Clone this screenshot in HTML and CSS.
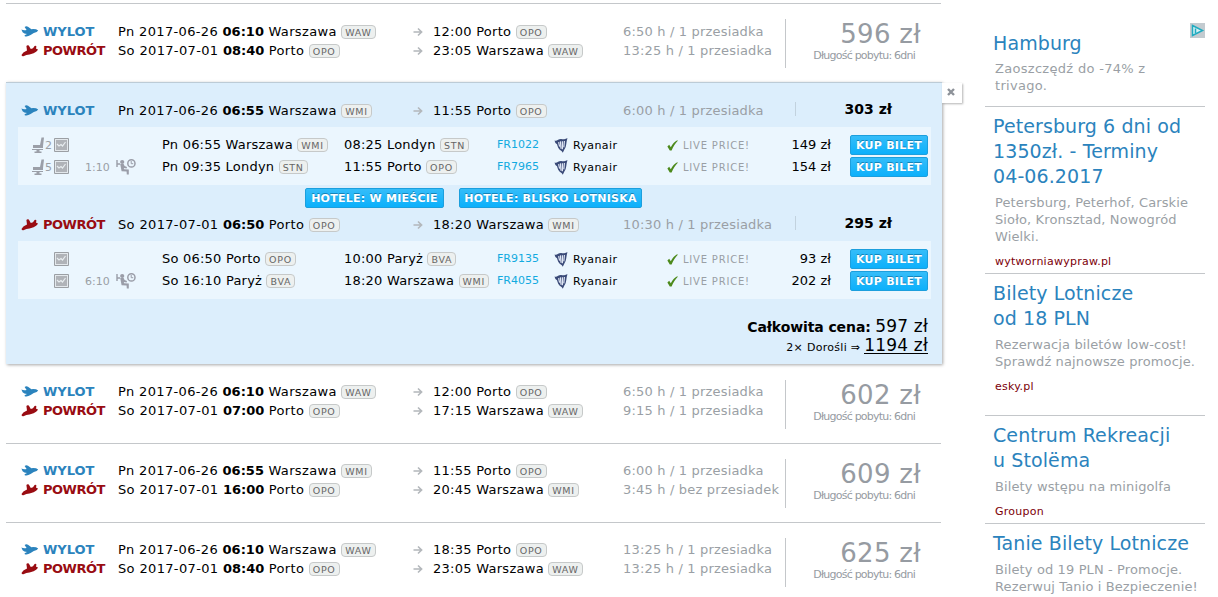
FILE: index.html
```
<!DOCTYPE html>
<html lang="pl">
<head>
  <meta charset="UTF-8">
  <title>Loty Warszawa - Porto</title>
  <link rel="stylesheet" href="styles.css">
</head>
<body>
  <svg class="sprite" width="0" height="0">
    <symbol id="plane-out" viewBox="0 0 18 13">
      <path d="M0.4 4.6 Q2.6 5.6 5.6 5 L3.6 2 Q5.4 0.8 7 1.8 L10.4 4.2 Q15 3.8 17.2 5.4 Q16.4 7.2 12.8 8 L9.6 10 Q6.4 12 3.8 11.2 L3.6 10.2 L6 9 Q3 9 1.6 7.2 Z"/>
    </symbol>
    <symbol id="plane-back" viewBox="0 0 18 13">
      <path d="M0.5 11 L2.4 8.4 L6 6.6 L5.4 2 Q6.4 0.6 7.8 1.6 L9.8 5 L12 4.2 L13.6 2 Q15 1.2 15.4 2.4 L15 4.8 Q17 4.8 16.8 6 Q15.6 8 12.6 9.2 L8.5 10.4 Q5 10.8 3 12 Q1 12.8 0.5 11 Z"/>
    </symbol>
    <symbol id="arrow" viewBox="0 0 10 10">
      <path d="M0.5 5 H8 M5 1.5 L8.6 5 L5 8.5" fill="none" stroke="currentColor" stroke-width="1.6"/>
    </symbol>
    <symbol id="seat" viewBox="0 0 13 16">
      <path d="M9.5 0.5 L12 0.5 L11 9 L11 11 L1 11 L1 8 L8 8 Z M0 12 H11 V13 H7.5 V14.5 H9.5 V16 H2.5 V14.5 H4.5 V13 H0 Z"/>
    </symbol>
    <symbol id="chart" viewBox="0 0 15 14">
      <path d="M0.5 0.5 H14.5 V13.5 H0.5 Z" fill="#e3e8ec" stroke="#9b9fa4"/>
      <path d="M2 2 H13 V12 H2 Z" fill="#b0b3b8"/>
      <path d="M3 6 L5 8 L7 6.5 L8.5 8 L11.5 4" fill="none" stroke="#e8edf0" stroke-width="1.2"/>
    </symbol>
    <symbol id="wait" viewBox="0 0 20 16">
      <path d="M1 1 V8 M1.5 5 H4" fill="none" stroke="currentColor" stroke-width="1.4"/>
      <circle cx="6.2" cy="3" r="2.1"/>
      <path d="M4.2 5 L7.6 5 L8.6 7 L11 8 L10.6 9.4 L7.8 9 L8.2 10.2 L12.8 10.4 L12.8 15.6 L10.8 15.6 L10.6 12.4 L5.6 12.2 Z"/>
      <circle cx="15.4" cy="4.4" r="3.6" fill="none" stroke="currentColor" stroke-width="1.5"/>
      <path d="M15.2 2 V4.7 H17.2" fill="none" stroke="currentColor"/>
    </symbol>
    <symbol id="harp" viewBox="0 0 14 15">
      <path d="M0.5 2.4 C3 3.8 4.5 0.4 8 1.2 C10 1.6 11.5 0.6 13.5 0.2 C12 4 12.8 8 10.6 11 L8.8 14.8 L7.8 13.2 C4.5 11.6 3.6 8.5 3 6.2 L1.4 5 Z" fill="#3a4a78"/>
      <path d="M4.6 4.2 L5.6 8.6 M6.4 3.4 L7 10.8 M8.4 3.2 L8.4 11.2 M10.4 3 L9.8 9.4" stroke="#dfe6f4" stroke-width="1.2"/>
    </symbol>
    <symbol id="check" viewBox="0 0 11 11">
      <path d="M0.4 6.4 L2.2 4.8 L3.8 7.2 C5.4 4 7.6 1.6 10.2 0.2 L10.8 0.8 C8.4 3.4 6.4 6.6 4.6 10.4 L2.8 10.6 Z"/>
    </symbol>
  </svg>

  <div class="page">
    <main class="results">
      <div class="offer">
        <div class="legs">
          <div class="leg"><svg class="plane out"><use href="#plane-out"/></svg><b class="dir out">WYLOT</b><span class="from">Pn 2017-06-26 <b>06:10</b> Warszawa <i>WAW</i></span><svg class="arrow"><use href="#arrow"/></svg><span class="to">12:00 Porto <i>OPO</i></span><span class="time">6:50 h / 1 przesiadka</span></div>
          <div class="leg"><svg class="plane back"><use href="#plane-back"/></svg><b class="dir back">POWRÓT</b><span class="from">So 2017-07-01 <b>08:40</b> Porto <i>OPO</i></span><svg class="arrow"><use href="#arrow"/></svg><span class="to">23:05 Warszawa <i>WAW</i></span><span class="time">13:25 h / 1 przesiadka</span></div>
        </div>
        <div class="price"><span class="amount">596 zł</span><span class="stay">Długość pobytu: 6dni</span></div>
      </div>

      <div class="offer-open">
        <div class="close"><svg width="8" height="8" viewBox="0 0 8 8"><path d="M1 1 L7 7 M7 1 L1 7" stroke="#8d9299" stroke-width="2.4"/></svg></div>
        <div class="leg"><svg class="plane out"><use href="#plane-out"/></svg><b class="dir out">WYLOT</b><span class="from">Pn 2017-06-26 <b>06:55</b> Warszawa <i>WMI</i></span><svg class="arrow"><use href="#arrow"/></svg><span class="to">11:55 Porto <i>OPO</i></span><span class="time">6:00 h / 1 przesiadka</span><b class="leg-price">303 zł</b></div>
        <div class="flights">
          <div class="flight"><span class="seats"><svg class="seat"><use href="#seat"/></svg>2</span><svg class="chart"><use href="#chart"/></svg><span class="wait"></span><span class="dep">Pn 06:55 Warszawa <i>WMI</i></span><span class="arr">08:25 Londyn <i>STN</i></span><a class="number">FR1022</a><svg class="harp"><use href="#harp"/></svg><span class="carrier">Ryanair</span><svg class="check"><use href="#check"/></svg><span class="live">LIVE PRICE!</span><span class="fare">149 zł</span><a class="btn buy">KUP BILET</a></div>
          <div class="flight"><span class="seats"><svg class="seat"><use href="#seat"/></svg>5</span><svg class="chart"><use href="#chart"/></svg><span class="wait">1:10<svg class="wait-icon"><use href="#wait"/></svg></span><span class="dep">Pn 09:35 Londyn <i>STN</i></span><span class="arr">11:55 Porto <i>OPO</i></span><a class="number">FR7965</a><svg class="harp"><use href="#harp"/></svg><span class="carrier">Ryanair</span><svg class="check"><use href="#check"/></svg><span class="live">LIVE PRICE!</span><span class="fare">154 zł</span><a class="btn buy">KUP BILET</a></div>
        </div>
        <div class="hotels"><a class="btn city">HOTELE: W MIEŚCIE</a><a class="btn airport">HOTELE: BLISKO LOTNISKA</a></div>
        <div class="leg"><svg class="plane back"><use href="#plane-back"/></svg><b class="dir back">POWRÓT</b><span class="from">So 2017-07-01 <b>06:50</b> Porto <i>OPO</i></span><svg class="arrow"><use href="#arrow"/></svg><span class="to">18:20 Warszawa <i>WMI</i></span><span class="time">10:30 h / 1 przesiadka</span><b class="leg-price">295 zł</b></div>
        <div class="flights">
          <div class="flight"><span class="seats"></span><svg class="chart"><use href="#chart"/></svg><span class="wait"></span><span class="dep">So 06:50 Porto <i>OPO</i></span><span class="arr">10:00 Paryż <i>BVA</i></span><a class="number">FR9135</a><svg class="harp"><use href="#harp"/></svg><span class="carrier">Ryanair</span><svg class="check"><use href="#check"/></svg><span class="live">LIVE PRICE!</span><span class="fare">93 zł</span><a class="btn buy">KUP BILET</a></div>
          <div class="flight"><span class="seats"></span><svg class="chart"><use href="#chart"/></svg><span class="wait">6:10<svg class="wait-icon"><use href="#wait"/></svg></span><span class="dep">So 16:10 Paryż <i>BVA</i></span><span class="arr">18:20 Warszawa <i>WMI</i></span><a class="number">FR4055</a><svg class="harp"><use href="#harp"/></svg><span class="carrier">Ryanair</span><svg class="check"><use href="#check"/></svg><span class="live">LIVE PRICE!</span><span class="fare">202 zł</span><a class="btn buy">KUP BILET</a></div>
        </div>
        <div class="total"><b>Całkowita cena:</b> <span class="sum">597 zł</span></div>
        <div class="total people">2× Dorośli ⇒ <span class="sum all">1194 zł</span></div>
      </div>

      <div class="offer first">
        <div class="legs">
          <div class="leg"><svg class="plane out"><use href="#plane-out"/></svg><b class="dir out">WYLOT</b><span class="from">Pn 2017-06-26 <b>06:10</b> Warszawa <i>WAW</i></span><svg class="arrow"><use href="#arrow"/></svg><span class="to">12:00 Porto <i>OPO</i></span><span class="time">6:50 h / 1 przesiadka</span></div>
          <div class="leg"><svg class="plane back"><use href="#plane-back"/></svg><b class="dir back">POWRÓT</b><span class="from">So 2017-07-01 <b>07:00</b> Porto <i>OPO</i></span><svg class="arrow"><use href="#arrow"/></svg><span class="to">17:15 Warszawa <i>WAW</i></span><span class="time">9:15 h / 1 przesiadka</span></div>
        </div>
        <div class="price"><span class="amount">602 zł</span><span class="stay">Długość pobytu: 6dni</span></div>
      </div>

      <div class="offer">
        <div class="legs">
          <div class="leg"><svg class="plane out"><use href="#plane-out"/></svg><b class="dir out">WYLOT</b><span class="from">Pn 2017-06-26 <b>06:55</b> Warszawa <i>WMI</i></span><svg class="arrow"><use href="#arrow"/></svg><span class="to">11:55 Porto <i>OPO</i></span><span class="time">6:00 h / 1 przesiadka</span></div>
          <div class="leg"><svg class="plane back"><use href="#plane-back"/></svg><b class="dir back">POWRÓT</b><span class="from">So 2017-07-01 <b>16:00</b> Porto <i>OPO</i></span><svg class="arrow"><use href="#arrow"/></svg><span class="to">20:45 Warszawa <i>WMI</i></span><span class="time">3:45 h / bez przesiadek</span></div>
        </div>
        <div class="price"><span class="amount">609 zł</span><span class="stay">Długość pobytu: 6dni</span></div>
      </div>

      <div class="offer">
        <div class="legs">
          <div class="leg"><svg class="plane out"><use href="#plane-out"/></svg><b class="dir out">WYLOT</b><span class="from">Pn 2017-06-26 <b>06:10</b> Warszawa <i>WAW</i></span><svg class="arrow"><use href="#arrow"/></svg><span class="to">18:35 Porto <i>OPO</i></span><span class="time">13:25 h / 1 przesiadka</span></div>
          <div class="leg"><svg class="plane back"><use href="#plane-back"/></svg><b class="dir back">POWRÓT</b><span class="from">So 2017-07-01 <b>08:40</b> Porto <i>OPO</i></span><svg class="arrow"><use href="#arrow"/></svg><span class="to">23:05 Warszawa <i>WAW</i></span><span class="time">13:25 h / 1 przesiadka</span></div>
        </div>
        <div class="price"><span class="amount">625 zł</span><span class="stay">Długość pobytu: 6dni</span></div>
      </div>
    </main>

    <aside class="ads">
      <svg class="adchoices" width="15" height="15" viewBox="0 0 15 15"><path d="M0 0 H15 V15 H0 Z" fill="#c3cbd0"/><path d="M2.5 2.5 L12.5 7.5 L2.5 12.5 Z" fill="#d5f1f5" stroke="#1fabc0" stroke-width="1.5"/><path d="M5.5 5.5 V10" stroke="#1fabc0" stroke-width="1.5"/></svg>
      <div class="ad hamburg">
        <h3>Hamburg</h3>
        <p>Zaoszczędź do -74% z<br>trivago.</p>
      </div>
      <div class="ad petersburg">
        <h3>Petersburg 6 dni od<br>1350zł. - Terminy<br>04-06.2017</h3>
        <p>Petersburg, Peterhof, Carskie<br>Sioło, Kronsztad, Nowogród<br>Wielki.</p>
        <a>wytworniawypraw.pl</a>
      </div>
      <div class="ad esky">
        <h3>Bilety Lotnicze<br>od 18 PLN</h3>
        <p>Rezerwacja biletów low-cost!<br>Sprawdź najnowsze promocje.</p>
        <a>esky.pl</a>
      </div>
      <div class="ad groupon">
        <h3>Centrum Rekreacji<br>u Stolëma</h3>
        <p>Bilety wstępu na minigolfa</p>
        <a>Groupon</a>
      </div>
      <div class="ad">
        <h3>Tanie Bilety Lotnicze</h3>
        <p>Bilety od 19 PLN - Promocje.<br>Rezerwuj Tanio i Bezpieczenie!</p>
      </div>
    </aside>
  </div>
</body>
</html>
```
FILE: styles.css
```
* {
  box-sizing: border-box;
}

body {
  margin: 0;
  height: 597px;
  overflow: hidden;
  background-color: #fff;
  color: #000;
  font-family: Verdana, "DejaVu Sans", sans-serif;
  font-size: 13px;
}

.sprite {
  display: block;
}

.page {
  display: flex;
  height: 597px;
  overflow: hidden;
}

.results {
  width: 936px;
  margin: 3px 43px 0 6px;
  flex: none;
}

/* single offer */
.offer {
  display: flex;
  width: 935px;
  height: 79px;
  border-top: 1px solid #c4c7ca;
}

.offer.first {
  border-top-color: transparent;
}

.legs {
  width: 779px;
  padding-top: 18px;
}

.offer-open ~ .offer .legs {
  padding-top: 17px;
}

.leg {
  display: flex;
  align-items: center;
  height: 19px;
  padding-left: 15px;
  white-space: nowrap;
}

.leg > * {
  flex: none;
}

.plane {
  width: 18px;
  height: 13px;
  margin-right: 4px;
}

.plane.out {
  fill: #2b83bd;
}

.plane.back {
  fill: #990c12;
}

.dir {
  width: 75px;
}

.dir.out {
  color: #2b83bd;
}

.dir.back {
  color: #990c12;
  letter-spacing: -0.5px;
}

.from {
  width: 295px;
  letter-spacing: 0.35px;
}

.from b {
  letter-spacing: 0;
}

.to {
  width: 190px;
  letter-spacing: 0.27px;
}

.arrow {
  width: 10px;
  height: 10px;
  margin-right: 10px;
  color: #b3b7bb;
}

.time {
  width: 172px;
  color: #9a9fa5;
  letter-spacing: 0.18px;
}

/* airport code */
i {
  display: inline-block;
  height: 14px;
  padding: 0 3px;
  border: 1px solid #c6c9c9;
  border-radius: 4px;
  background-color: #edf0ef;
  color: #666;
  font-size: 9.5px;
  font-style: normal;
  line-height: 13px;
  letter-spacing: 0.7px;
}

.price {
  display: flex;
  flex-direction: column;
  width: 136px;
  height: 49px;
  margin-top: 15px;
  border-left: 1px solid #c4c7ca;
  color: #969ba2;
  text-align: right;
  white-space: nowrap;
}

.amount {
  font-size: 26px;
  line-height: 30px;
  letter-spacing: 0.3px;
}

.stay {
  padding-right: 6px;
  font-size: 11px;
  line-height: 13px;
  letter-spacing: -0.78px;
}

.offer:first-child .stay {
  line-height: 14px;
}

/* expanded offer */
.offer-open {
  position: relative;
  height: 282px;
  padding-top: 18px;
  border-top: 1px solid #bccbd6;
  background-color: #dceefc;
  box-shadow: 1px 1px 3px rgba(0, 0, 0, 0.35);
}

.close {
  position: absolute;
  top: 0;
  left: 936px;
  width: 20px;
  height: 20px;
  padding: 3px 5px;
  line-height: 12px;
  background-color: #fff;
  box-shadow: 1px 1px 2px rgba(0, 0, 0, 0.3);
}

.leg-price {
  width: 97px;
  margin-bottom: 4px;
  border-left: 1px solid #c2d2de;
  font-size: 14px;
  line-height: 14px;
  text-align: right;
}

.flights {
  width: 913px;
  height: 58px;
  margin: 7px 0 0 12px;
  padding: 7px 0 0 14px;
  background-color: #ebf6fe;
}

.flight {
  display: flex;
  align-items: center;
  height: 22px;
  white-space: nowrap;
}

.flight > * {
  flex: none;
}

.seats {
  display: flex;
  align-items: center;
  width: 22px;
  color: #9a9fa5;
  font-size: 11px;
}

.seat {
  width: 13px;
  height: 16px;
  fill: #9b9fa8;
}

.chart {
  width: 15px;
  height: 14px;
}

.wait {
  display: flex;
  align-items: center;
  width: 93px;
  padding-left: 16px;
  color: #9a9fa5;
  font-size: 11px;
}

.wait-icon {
  width: 20px;
  height: 16px;
  margin-left: 6px;
  color: #9a9da8;
  fill: #9a9da8;
}

.dep,
.arr,
.fare {
  margin-bottom: 2px;
  letter-spacing: 0.22px;
}

.dep {
  width: 182px;
}

.arr {
  width: 153px;
}

.number {
  width: 57px;
  margin-bottom: 2px;
  color: #12aae0;
  font-size: 11px;
}

.harp {
  width: 14px;
  height: 15px;
  margin-right: 5px;
}

.carrier {
  width: 94px;
  font-size: 11px;
  letter-spacing: 0.4px;
}

.check {
  width: 11px;
  height: 11px;
  margin-right: 5px;
  fill: #4d8a1c;
}

.live {
  width: 68px;
  color: #9a9fa5;
  font-size: 10px;
  letter-spacing: 0.8px;
}

.fare {
  width: 80px;
  margin-right: 19px;
  letter-spacing: 0;
  text-align: right;
}

.btn {
  display: block;
  height: 20px;
  border: 1px solid #1c9fdd;
  border-radius: 2px;
  background: linear-gradient(#35bdf9, #0cb0fb);
  color: #fff;
  font-size: 11px;
  font-weight: bold;
  line-height: 19px;
  letter-spacing: 0.25px;
  text-align: center;
  text-shadow: 0 -1px 0 #1583b8;
  white-space: nowrap;
}

.buy {
  width: 78px;
}

.hotels {
  display: flex;
  gap: 15px;
  height: 30px;
  padding: 3px 0 0 299px;
}

.city {
  width: 139px;
}

.airport {
  width: 183px;
}

.total {
  height: 19px;
  padding-right: 14px;
  font-size: 14px;
  line-height: 19px;
  text-align: right;
  white-space: nowrap;
}

.total b {
  letter-spacing: -0.1px;
}

.flights + .total {
  margin-top: 18px;
}

.people {
  font-size: 11px;
  letter-spacing: 0.3px;
}

.sum {
  font-size: 17px;
  letter-spacing: 0.2px;
}

.all {
  display: inline-block;
  height: 18px;
  border-bottom: 1px solid #000;
}

/* right column */
.ads {
  position: relative;
  width: 220px;
  padding-top: 24px;
}

.adchoices {
  position: absolute;
  top: 23px;
  left: 205px;
}

.ad {
  padding: 7px 0 0 8px;
  border-bottom: 1px solid #c4c7ca;
  white-space: nowrap;
}

.ad:last-child {
  border-bottom: 0;
}

.ad h3 {
  margin: 0 0 5px;
  color: #2b83bd;
  font-size: 19px;
  font-weight: normal;
  line-height: 25px;
  letter-spacing: 0.1px;
}

.ad p {
  margin: 0 0 8px 2px;
  color: #9a9fa5;
  line-height: 17px;
  letter-spacing: 0.12px;
}

.ad a {
  display: block;
  margin-left: 2px;
  color: #7c0008;
  font-size: 11px;
  line-height: 17px;
  letter-spacing: 0.25px;
}

.hamburg {
  height: 83px;
}

.hamburg h3 {
  margin-bottom: 4px;
}

.hamburg p {
  letter-spacing: 0.3px;
}

.petersburg {
  height: 167px;
}

.esky {
  height: 142px;
}

.groupon {
  height: 108px;
}
```
